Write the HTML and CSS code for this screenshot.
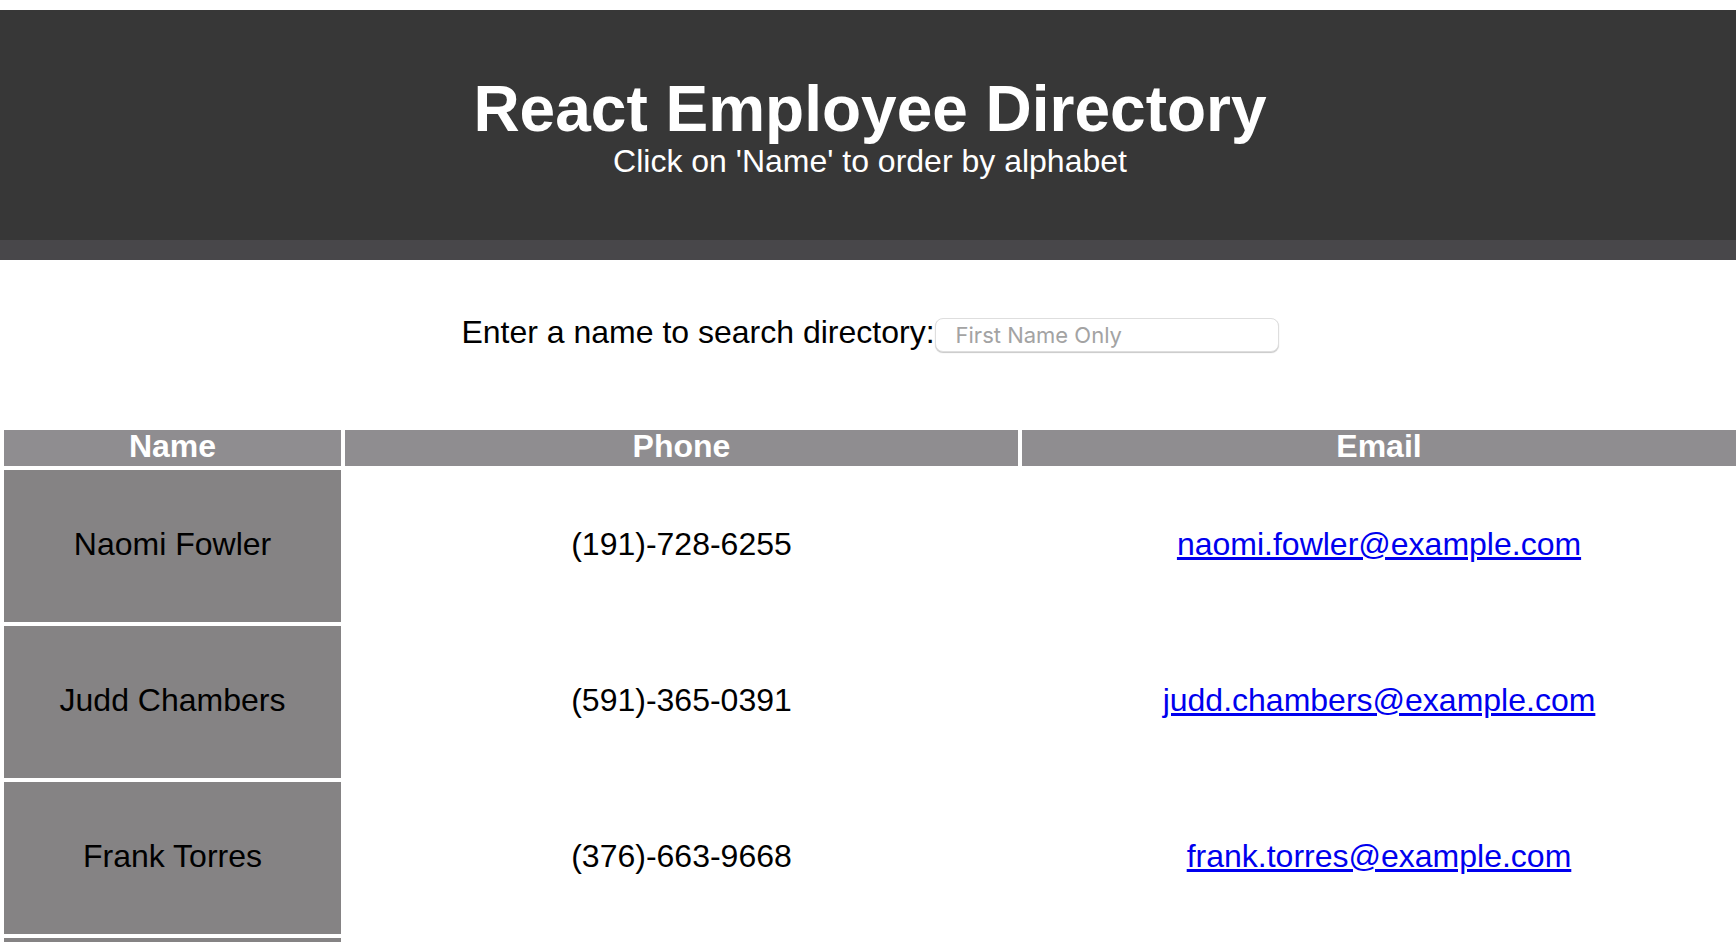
FILE: index.html
```html
<!DOCTYPE html>
<html lang="en">
<head>
<meta charset="utf-8">
<title>React Employee Directory</title>
<link rel="stylesheet" href="styles.css">
</head>
<body>
<div class="page">
  <header class="hero">
    <h1 class="hero-title">React Employee Directory</h1>
    <p class="hero-sub">Click on 'Name' to order by alphabet</p>
  </header>
  <div class="search">
    <label class="search-label" for="search">Enter a name to search directory:</label><input class="search-input" id="search" type="text" placeholder="First Name Only">
  </div>
  <table class="directory">
    <colgroup>
      <col class="col-name">
      <col class="col-phone">
      <col class="col-email">
    </colgroup>
    <thead>
      <tr>
        <th>Name</th>
        <th>Phone</th>
        <th>Email</th>
      </tr>
    </thead>
    <tbody>
      <tr>
        <td class="name">Naomi Fowler</td>
        <td>(191)-728-6255</td>
        <td><a href="#">naomi.fowler@example.com</a></td>
      </tr>
      <tr>
        <td class="name">Judd Chambers</td>
        <td>(591)-365-0391</td>
        <td><a href="#">judd.chambers@example.com</a></td>
      </tr>
      <tr>
        <td class="name">Frank Torres</td>
        <td>(376)-663-9668</td>
        <td><a href="#">frank.torres@example.com</a></td>
      </tr>
      <tr>
        <td class="name">Lena Howard</td>
        <td>(842)-419-2273</td>
        <td><a href="#">lena.howard@example.com</a></td>
      </tr>
    </tbody>
  </table>
</div>
</body>
</html>
```
FILE: styles.css
```css
html {
  scrollbar-width: none;
}
html::-webkit-scrollbar {
  display: none;
}
body {
  margin: 0;
  overflow-x: hidden;
  background: #ffffff;
  font-family: "Liberation Sans", Arial, Helvetica, sans-serif;
  color: #000000;
}
.page {
  width: calc(100% + 4px);
}
.hero {
  box-sizing: border-box;
  margin-top: 10px;
  height: 250px;
  padding-bottom: 2px;
  background: #373737;
  border-bottom: 20px solid #48474a;
  display: flex;
  flex-direction: column;
  justify-content: center;
  align-items: center;
  color: #ffffff;
}
.hero-title {
  margin: 0;
  font-size: 64px;
  font-weight: bold;
  line-height: normal;
}
.hero-sub {
  margin: 0;
  font-size: 32px;
  line-height: 30px;
}
.search {
  padding-top: 54px;
  text-align: center;
  font-size: 32px;
}
.search-label {
  color: #000000;
}
.search-input {
  box-sizing: border-box;
  width: 344px;
  height: 34px;
  margin: 0;
  padding: 0 0 0 20px;
  border: 1px solid #dedede;
  border-radius: 8px;
  box-shadow: 0 1px 1px rgba(0, 0, 0, 0.22);
  background: #ffffff;
  font-family: Inter, "Open Sans", sans-serif;
  font-size: 22px;
  color: #333333;
  outline: none;
}
.search-input::placeholder {
  color: #a3a3a3;
}
.directory {
  margin-top: 74px;
  width: 100%;
  table-layout: fixed;
  border-spacing: 4px;
  font-size: 32px;
}
.col-name {
  width: 337px;
}
.col-phone {
  width: 673px;
}
.directory th {
  background: #8f8d90;
  color: #ffffff;
  font-weight: bold;
  padding: 0 0 4px;
  line-height: 32px;
  text-align: center;
}
.directory td {
  height: 148px;
  padding: 0 0 4px;
  text-align: center;
  vertical-align: middle;
  line-height: 36px;
}
.directory td.name {
  background: #858384;
}
.directory a {
  color: #0000ee;
  text-decoration: underline;
}
```
